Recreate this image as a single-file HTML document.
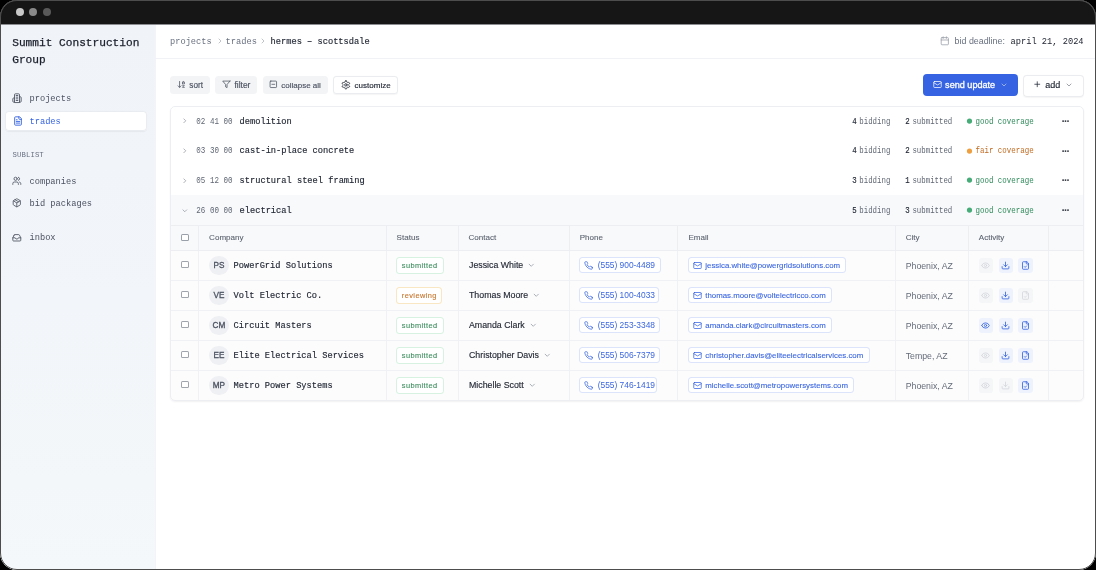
<!DOCTYPE html>
<html><head><meta charset="utf-8"><style>
html,body{margin:0;padding:0;background:#000;}
body{width:1096px;height:570px;overflow:hidden;position:relative;}
#win{position:absolute;left:0;top:0;width:1096px;height:570px;border-radius:17px;overflow:hidden;background:#fff;will-change:transform;}
.t{position:absolute;white-space:nowrap;}
.r{position:absolute;}
.i{position:absolute;overflow:visible;}
#frame{position:absolute;left:0;top:0;width:1096px;height:570px;box-sizing:border-box;border:1px solid #4d4d4d;border-radius:17px;pointer-events:none;}
</style></head><body><div id="win">
<div class="r" style="left:0.00px;top:0.00px;width:1096.00px;height:24.00px;background:#161616;border-radius:0px;"></div>
<div class="r" style="left:0.00px;top:24.00px;width:1096.00px;height:1.00px;background:#8c8d90;border-radius:0px;"></div>
<div class="r" style="left:16.00px;top:8.00px;width:8.00px;height:8.00px;background:#c8c8c8;border-radius:4px;"></div>
<div class="r" style="left:29.00px;top:8.00px;width:8.00px;height:8.00px;background:#8a8a8a;border-radius:4px;"></div>
<div class="r" style="left:43.00px;top:8.00px;width:8.00px;height:8.00px;background:#5a5a5a;border-radius:4px;"></div>
<div class="r" style="left:0.00px;top:25.00px;width:155.40px;height:545.00px;background:linear-gradient(180deg,#f0f3f8 0%,#f2f5f9 50%,#f5f8fa 100%);border-radius:0px;"></div>
<div class="r" style="left:154.90px;top:25.00px;width:0.60px;height:545.00px;background:rgba(225,228,234,0.4);border-radius:0px;"></div>
<div class="t" style="left:12.20px;top:37px;font-family:'Liberation Mono', monospace;font-size:11.17px;line-height:12px;color:#1a1f2b;font-weight:400;-webkit-text-stroke:0.25px currentColor;">Summit Construction</div>
<div class="t" style="left:12.20px;top:54px;font-family:'Liberation Mono', monospace;font-size:11.17px;line-height:12px;color:#1a1f2b;font-weight:400;-webkit-text-stroke:0.25px currentColor;">Group</div>
<svg class="i" style="left:12.30px;top:93.45px;width:10.00px;height:10.00px;" viewBox="0 0 24 24" fill="none" stroke="#525966" stroke-width="2.2" stroke-linecap="round" stroke-linejoin="round"><path d="M6 22V4a2 2 0 0 1 2-2h8a2 2 0 0 1 2 2v18Z"/><path d="M6 12H4a2 2 0 0 0-2 2v6a2 2 0 0 0 2 2h2"/><path d="M18 9h2a2 2 0 0 1 2 2v9a2 2 0 0 1-2 2h-2"/><path d="M10 6h4"/><path d="M10 10h4"/><path d="M10 14h4"/><path d="M10 18h4"/></svg>
<div class="t" style="left:29.50px;top:94px;font-family:'Liberation Mono', monospace;font-size:8.7px;line-height:10px;color:#4b5261;font-weight:400;">projects</div>
<div class="r" style="left:5.20px;top:111.30px;width:141.80px;height:20.00px;background:#fff;border-radius:4px;box-shadow:inset 0 0 0 1px #e9ecf0, 0 0.5px 1px rgba(0,0,0,0.05);"></div>
<svg class="i" style="left:12.50px;top:115.70px;width:10.00px;height:10.00px;" viewBox="0 0 24 24" fill="none" stroke="#3563e1" stroke-width="2.2" stroke-linecap="round" stroke-linejoin="round"><path d="M15 2H6a2 2 0 0 0-2 2v16a2 2 0 0 0 2 2h12a2 2 0 0 0 2-2V7Z"/><path d="M14 2v4a2 2 0 0 0 2 2h4"/><path d="M10 9H8"/><path d="M16 13H8"/><path d="M16 17H8"/></svg>
<div class="t" style="left:29.50px;top:117px;font-family:'Liberation Mono', monospace;font-size:8.7px;line-height:10px;color:#3563e1;font-weight:400;">trades</div>
<div class="t" style="left:12.50px;top:151px;font-family:'Liberation Mono', monospace;font-size:7.3px;line-height:8px;color:#687080;font-weight:400;letter-spacing:0.1px;transform:scaleY(1.1);transform-origin:0 85%;">SUBLIST</div>
<svg class="i" style="left:12.30px;top:175.90px;width:9.60px;height:9.60px;" viewBox="0 0 24 24" fill="none" stroke="#525966" stroke-width="2.2" stroke-linecap="round" stroke-linejoin="round"><path d="M16 21v-2a4 4 0 0 0-4-4H6a4 4 0 0 0-4 4v2"/><circle cx="9" cy="7" r="4"/><path d="M22 21v-2a4 4 0 0 0-3-3.87"/><path d="M16 3.13a4 4 0 0 1 0 7.75"/></svg>
<div class="t" style="left:29.50px;top:177px;font-family:'Liberation Mono', monospace;font-size:8.7px;line-height:10px;color:#4b5261;font-weight:400;">companies</div>
<svg class="i" style="left:12.40px;top:198.30px;width:9.60px;height:9.60px;" viewBox="0 0 24 24" fill="none" stroke="#525966" stroke-width="2.2" stroke-linecap="round" stroke-linejoin="round"><path d="M11 21.73a2 2 0 0 0 2 0l7-4A2 2 0 0 0 21 16V8a2 2 0 0 0-1-1.73l-7-4a2 2 0 0 0-2 0l-7 4A2 2 0 0 0 3 8v8a2 2 0 0 0 1 1.73z"/><path d="M12 22V12"/><path d="m3.3 7 7.703 4.734a2 2 0 0 0 1.994 0L20.7 7"/><path d="m7.5 4.27 9 5.15"/></svg>
<div class="t" style="left:29.50px;top:199px;font-family:'Liberation Mono', monospace;font-size:8.7px;line-height:10px;color:#4b5261;font-weight:400;">bid packages</div>
<svg class="i" style="left:12.40px;top:232.50px;width:9.60px;height:9.60px;" viewBox="0 0 24 24" fill="none" stroke="#525966" stroke-width="2.2" stroke-linecap="round" stroke-linejoin="round"><polyline points="22 12 16 12 14 15 10 15 8 12 2 12"/><path d="M5.45 5.11 2 12v6a2 2 0 0 0 2 2h16a2 2 0 0 0 2-2v-6l-3.45-6.89A2 2 0 0 0 16.76 4H7.24a2 2 0 0 0-1.79 1.11z"/></svg>
<div class="t" style="left:29.50px;top:233px;font-family:'Liberation Mono', monospace;font-size:8.7px;line-height:10px;color:#4b5261;font-weight:400;">inbox</div>
<div class="r" style="left:155.40px;top:58.00px;width:940.60px;height:1.00px;background:#f1f2f5;border-radius:0px;"></div>
<div class="t" style="left:170.00px;top:37px;font-family:'Liberation Mono', monospace;font-size:8.7px;line-height:10px;color:#687080;font-weight:400;">projects</div>
<svg class="i" style="left:215.50px;top:37.10px;width:8.00px;height:8.00px;" viewBox="0 0 24 24" fill="none" stroke="#9ba1ab" stroke-width="1.9" stroke-linecap="round" stroke-linejoin="round"><path d="m9 18 6-6-6-6"/></svg>
<div class="t" style="left:225.60px;top:37px;font-family:'Liberation Mono', monospace;font-size:8.7px;line-height:10px;color:#687080;font-weight:400;">trades</div>
<svg class="i" style="left:259.20px;top:37.10px;width:8.00px;height:8.00px;" viewBox="0 0 24 24" fill="none" stroke="#9ba1ab" stroke-width="1.9" stroke-linecap="round" stroke-linejoin="round"><path d="m9 18 6-6-6-6"/></svg>
<div class="t" style="left:270.60px;top:37px;font-family:'Liberation Mono', monospace;font-size:8.7px;line-height:10px;color:#1d2330;font-weight:400;-webkit-text-stroke:0.15px currentColor;">hermes – scottsdale</div>
<svg class="i" style="left:940.10px;top:36.10px;width:9.60px;height:9.60px;" viewBox="0 0 24 24" fill="none" stroke="#9aa0aa" stroke-width="2" stroke-linecap="round" stroke-linejoin="round"><path d="M8 2v4"/><path d="M16 2v4"/><rect width="18" height="18" x="3" y="4" rx="2"/><path d="M3 10h18"/></svg>
<div class="t" style="left:954.60px;top:36px;font-family:'Liberation Sans', sans-serif;font-size:8.87px;line-height:10px;color:#687080;font-weight:400;">bid deadline:</div>
<div class="t" style="left:1010.60px;top:37px;font-family:'Liberation Mono', monospace;font-size:8.7px;line-height:10px;color:#202532;font-weight:400;">april 21, 2024</div>
<div class="r" style="left:170.00px;top:76.00px;width:39.80px;height:17.60px;background:#f3f4f6;border-radius:3.5px;"></div>
<svg class="i" style="left:177.30px;top:80.35px;width:8.80px;height:8.80px;" viewBox="0 0 24 24" fill="none" stroke="#4b5261" stroke-width="2.1" stroke-linecap="round" stroke-linejoin="round"><path d="m3 16 4 4 4-4"/><path d="M7 20V4"/><path d="M20 8h-5"/><path d="M15 10V6.5a2.5 2.5 0 0 1 5 0V10"/><path d="M15 14h5l-5 6h5"/></svg>
<div class="t" style="left:189.30px;top:81px;font-family:'Liberation Sans', sans-serif;font-size:8.2px;line-height:9px;color:#4b5261;font-weight:400;-webkit-text-stroke:0.15px currentColor;">sort</div>
<div class="r" style="left:215.30px;top:76.00px;width:42.20px;height:17.60px;background:#f3f4f6;border-radius:3.5px;"></div>
<svg class="i" style="left:221.75px;top:80.35px;width:8.70px;height:8.70px;" viewBox="0 0 24 24" fill="none" stroke="#4b5261" stroke-width="2.1" stroke-linecap="round" stroke-linejoin="round"><polygon points="22 3 2 3 10 12.46 10 19 14 21 14 12.46 22 3"/></svg>
<div class="t" style="left:234.40px;top:80px;font-family:'Liberation Sans', sans-serif;font-size:8.5px;line-height:10px;color:#4b5261;font-weight:400;-webkit-text-stroke:0.15px currentColor;">filter</div>
<div class="r" style="left:262.80px;top:76.00px;width:65.00px;height:17.60px;background:#f3f4f6;border-radius:3.5px;"></div>
<svg class="i" style="left:269.30px;top:80.10px;width:8.64px;height:8.64px;" viewBox="0 0 24 24" fill="none" stroke="#4b5261" stroke-width="2.1" stroke-linecap="round" stroke-linejoin="round"><rect width="18" height="18" x="3" y="3" rx="2"/><path d="M8 12h8"/></svg>
<div class="t" style="left:281.30px;top:81px;font-family:'Liberation Sans', sans-serif;font-size:8.0px;line-height:9px;color:#4b5261;font-weight:400;-webkit-text-stroke:0.15px currentColor;">collapse all</div>
<div class="r" style="left:332.80px;top:75.60px;width:65.70px;height:18.40px;background:#fff;border-radius:3.5px;box-shadow:inset 0 0 0 1px #eaecef;box-shadow:inset 0 0 0 1px #eaecef, 0 0.5px 1px rgba(0,0,0,0.04);"></div>
<svg class="i" style="left:340.50px;top:79.65px;width:9.80px;height:9.80px;" viewBox="0 0 24 24" fill="none" stroke="#1d2330" stroke-width="2" stroke-linecap="round" stroke-linejoin="round"><path d="M12.22 2h-.44a2 2 0 0 0-2 2v.18a2 2 0 0 1-1 1.73l-.43.25a2 2 0 0 1-2 0l-.15-.08a2 2 0 0 0-2.73.73l-.22.38a2 2 0 0 0 .73 2.73l.15.1a2 2 0 0 1 1 1.72v.51a2 2 0 0 1-1 1.74l-.15.09a2 2 0 0 0-.73 2.73l.22.38a2 2 0 0 0 2.73.73l.15-.08a2 2 0 0 1 2 0l.43.25a2 2 0 0 1 1 1.73V20a2 2 0 0 0 2 2h.44a2 2 0 0 0 2-2v-.18a2 2 0 0 1 1-1.73l.43-.25a2 2 0 0 1 2 0l.15.08a2 2 0 0 0 2.73-.73l.22-.39a2 2 0 0 0-.73-2.73l-.15-.08a2 2 0 0 1-1-1.74v-.5a2 2 0 0 1 1-1.74l.15-.09a2 2 0 0 0 .73-2.73l-.22-.38a2 2 0 0 0-2.73-.73l-.15.08a2 2 0 0 1-2 0l-.43-.25a2 2 0 0 1-1-1.73V4a2 2 0 0 0-2-2z"/><circle cx="12" cy="12" r="3"/></svg>
<div class="t" style="left:354.60px;top:81px;font-family:'Liberation Sans', sans-serif;font-size:8.0px;line-height:9px;color:#1d2330;font-weight:400;-webkit-text-stroke:0.15px currentColor;">customize</div>
<div class="r" style="left:922.90px;top:74.10px;width:94.90px;height:21.80px;background:#3563e1;border-radius:4px;"></div>
<svg class="i" style="left:932.50px;top:80.15px;width:9.00px;height:9.00px;" viewBox="0 0 24 24" fill="none" stroke="#fff" stroke-width="2" stroke-linecap="round" stroke-linejoin="round"><rect width="20" height="16" x="2" y="4" rx="2"/><path d="m22 7-8.97 5.7a1.94 1.94 0 0 1-2.06 0L2 7"/></svg>
<div class="t" style="left:945.10px;top:80px;font-family:'Liberation Sans', sans-serif;font-size:9.1px;line-height:10px;color:#fff;font-weight:400;-webkit-text-stroke:0.3px #fff;">send update</div>
<svg class="i" style="left:1000.00px;top:80.75px;width:8.00px;height:8.00px;" viewBox="0 0 24 24" fill="none" stroke="#c9d5f8" stroke-width="2" stroke-linecap="round" stroke-linejoin="round"><path d="m6 9 6 6 6-6"/></svg>
<div class="r" style="left:1023.20px;top:74.50px;width:60.50px;height:22.00px;background:#fff;border-radius:4px;box-shadow:inset 0 0 0 1px #eaecef;box-shadow:inset 0 0 0 1px #eaecef, 0 0.5px 1px rgba(0,0,0,0.04);"></div>
<svg class="i" style="left:1033.35px;top:80.45px;width:8.50px;height:8.50px;" viewBox="0 0 24 24" fill="none" stroke="#1d2330" stroke-width="2.1" stroke-linecap="round" stroke-linejoin="round"><path d="M5 12h14"/><path d="M12 5v14"/></svg>
<div class="t" style="left:1045.30px;top:80px;font-family:'Liberation Sans', sans-serif;font-size:9.0px;line-height:10px;color:#1d2330;font-weight:400;-webkit-text-stroke:0.15px currentColor;">add</div>
<svg class="i" style="left:1065.35px;top:80.50px;width:8.00px;height:8.00px;" viewBox="0 0 24 24" fill="none" stroke="#6b7280" stroke-width="2" stroke-linecap="round" stroke-linejoin="round"><path d="m6 9 6 6 6-6"/></svg>
<div class="r" style="left:170.00px;top:106.00px;width:914.00px;height:295.00px;background:#fff;border-radius:5px;box-shadow:0 1px 2px rgba(16,24,40,0.06);"></div>
<div class="r" style="left:171.00px;top:195.00px;width:912.00px;height:30.00px;background:#f8f9fb;border-radius:0px;"></div>
<svg class="i" style="left:180.80px;top:117.40px;width:7.60px;height:7.60px;" viewBox="0 0 24 24" fill="none" stroke="#8d939d" stroke-width="2.3" stroke-linecap="round" stroke-linejoin="round"><path d="m9 18 6-6-6-6"/></svg>
<div class="t" style="left:196.30px;top:118px;font-family:'Liberation Mono', monospace;font-size:7.56px;line-height:8px;color:#5f6673;font-weight:400;transform:scaleY(1.13);transform-origin:0 85%;">02 41 00</div>
<div class="t" style="left:239.60px;top:117px;font-family:'Liberation Mono', monospace;font-size:8.7px;line-height:10px;color:#1d2330;font-weight:400;-webkit-text-stroke:0.15px currentColor;">demolition</div>
<div class="t" style="left:852.20px;top:118px;font-family:'Liberation Mono', monospace;font-size:7.4px;line-height:8px;color:#1d2330;font-weight:400;-webkit-text-stroke:0.12px currentColor;transform:scaleY(1.15);transform-origin:0 85%;">4</div>
<div class="t" style="left:859.30px;top:118px;font-family:'Liberation Mono', monospace;font-size:7.4px;line-height:8px;color:#5f6673;font-weight:400;transform:scaleY(1.15);transform-origin:0 85%;">bidding</div>
<div class="t" style="left:905.30px;top:118px;font-family:'Liberation Mono', monospace;font-size:7.4px;line-height:8px;color:#1d2330;font-weight:400;-webkit-text-stroke:0.12px currentColor;transform:scaleY(1.15);transform-origin:0 85%;">2</div>
<div class="t" style="left:912.40px;top:118px;font-family:'Liberation Mono', monospace;font-size:7.4px;line-height:8px;color:#5f6673;font-weight:400;transform:scaleY(1.15);transform-origin:0 85%;">submitted</div>
<svg class="i" style="left:964.00px;top:116.00px;width:10px;height:10px" viewBox="0 0 10 10"><circle cx="5.5" cy="5.1" r="2.6" fill="#46ad78"/></svg>
<div class="t" style="left:975.50px;top:118px;font-family:'Liberation Mono', monospace;font-size:7.46px;line-height:8px;color:#2f8a5a;font-weight:400;transform:scaleY(1.15);transform-origin:0 85%;">good coverage</div>
<svg class="i" style="left:1058.00px;top:116.00px;width:16px;height:10px" viewBox="0 0 16 10"><circle cx="5.1" cy="5.1" r="0.95" fill="#2a2f38"/><circle cx="7.5" cy="5.1" r="0.95" fill="#2a2f38"/><circle cx="10.0" cy="5.1" r="0.95" fill="#2a2f38"/></svg>
<svg class="i" style="left:180.80px;top:147.00px;width:7.60px;height:7.60px;" viewBox="0 0 24 24" fill="none" stroke="#8d939d" stroke-width="2.3" stroke-linecap="round" stroke-linejoin="round"><path d="m9 18 6-6-6-6"/></svg>
<div class="t" style="left:196.30px;top:147px;font-family:'Liberation Mono', monospace;font-size:7.56px;line-height:8px;color:#5f6673;font-weight:400;transform:scaleY(1.13);transform-origin:0 85%;">03 30 00</div>
<div class="t" style="left:239.60px;top:146px;font-family:'Liberation Mono', monospace;font-size:8.7px;line-height:10px;color:#1d2330;font-weight:400;-webkit-text-stroke:0.15px currentColor;">cast-in-place concrete</div>
<div class="t" style="left:852.20px;top:147px;font-family:'Liberation Mono', monospace;font-size:7.4px;line-height:8px;color:#1d2330;font-weight:400;-webkit-text-stroke:0.12px currentColor;transform:scaleY(1.15);transform-origin:0 85%;">4</div>
<div class="t" style="left:859.30px;top:147px;font-family:'Liberation Mono', monospace;font-size:7.4px;line-height:8px;color:#5f6673;font-weight:400;transform:scaleY(1.15);transform-origin:0 85%;">bidding</div>
<div class="t" style="left:905.30px;top:147px;font-family:'Liberation Mono', monospace;font-size:7.4px;line-height:8px;color:#1d2330;font-weight:400;-webkit-text-stroke:0.12px currentColor;transform:scaleY(1.15);transform-origin:0 85%;">2</div>
<div class="t" style="left:912.40px;top:147px;font-family:'Liberation Mono', monospace;font-size:7.4px;line-height:8px;color:#5f6673;font-weight:400;transform:scaleY(1.15);transform-origin:0 85%;">submitted</div>
<svg class="i" style="left:964.00px;top:145.60px;width:10px;height:10px" viewBox="0 0 10 10"><circle cx="5.5" cy="5.1" r="2.6" fill="#eea040"/></svg>
<div class="t" style="left:975.50px;top:147px;font-family:'Liberation Mono', monospace;font-size:7.46px;line-height:8px;color:#c06a20;font-weight:400;transform:scaleY(1.15);transform-origin:0 85%;">fair coverage</div>
<svg class="i" style="left:1058.00px;top:145.60px;width:16px;height:10px" viewBox="0 0 16 10"><circle cx="5.1" cy="5.1" r="0.95" fill="#2a2f38"/><circle cx="7.5" cy="5.1" r="0.95" fill="#2a2f38"/><circle cx="10.0" cy="5.1" r="0.95" fill="#2a2f38"/></svg>
<svg class="i" style="left:180.80px;top:176.70px;width:7.60px;height:7.60px;" viewBox="0 0 24 24" fill="none" stroke="#8d939d" stroke-width="2.3" stroke-linecap="round" stroke-linejoin="round"><path d="m9 18 6-6-6-6"/></svg>
<div class="t" style="left:196.30px;top:177px;font-family:'Liberation Mono', monospace;font-size:7.56px;line-height:8px;color:#5f6673;font-weight:400;transform:scaleY(1.13);transform-origin:0 85%;">05 12 00</div>
<div class="t" style="left:239.60px;top:176px;font-family:'Liberation Mono', monospace;font-size:8.7px;line-height:10px;color:#1d2330;font-weight:400;-webkit-text-stroke:0.15px currentColor;">structural steel framing</div>
<div class="t" style="left:852.20px;top:177px;font-family:'Liberation Mono', monospace;font-size:7.4px;line-height:8px;color:#1d2330;font-weight:400;-webkit-text-stroke:0.12px currentColor;transform:scaleY(1.15);transform-origin:0 85%;">3</div>
<div class="t" style="left:859.30px;top:177px;font-family:'Liberation Mono', monospace;font-size:7.4px;line-height:8px;color:#5f6673;font-weight:400;transform:scaleY(1.15);transform-origin:0 85%;">bidding</div>
<div class="t" style="left:905.30px;top:177px;font-family:'Liberation Mono', monospace;font-size:7.4px;line-height:8px;color:#1d2330;font-weight:400;-webkit-text-stroke:0.12px currentColor;transform:scaleY(1.15);transform-origin:0 85%;">1</div>
<div class="t" style="left:912.40px;top:177px;font-family:'Liberation Mono', monospace;font-size:7.4px;line-height:8px;color:#5f6673;font-weight:400;transform:scaleY(1.15);transform-origin:0 85%;">submitted</div>
<svg class="i" style="left:964.00px;top:175.30px;width:10px;height:10px" viewBox="0 0 10 10"><circle cx="5.5" cy="5.1" r="2.6" fill="#46ad78"/></svg>
<div class="t" style="left:975.50px;top:177px;font-family:'Liberation Mono', monospace;font-size:7.46px;line-height:8px;color:#2f8a5a;font-weight:400;transform:scaleY(1.15);transform-origin:0 85%;">good coverage</div>
<svg class="i" style="left:1058.00px;top:175.30px;width:16px;height:10px" viewBox="0 0 16 10"><circle cx="5.1" cy="5.1" r="0.95" fill="#2a2f38"/><circle cx="7.5" cy="5.1" r="0.95" fill="#2a2f38"/><circle cx="10.0" cy="5.1" r="0.95" fill="#2a2f38"/></svg>
<svg class="i" style="left:180.80px;top:206.50px;width:7.60px;height:7.60px;" viewBox="0 0 24 24" fill="none" stroke="#8d939d" stroke-width="2.3" stroke-linecap="round" stroke-linejoin="round"><path d="m6 9 6 6 6-6"/></svg>
<div class="t" style="left:196.30px;top:207px;font-family:'Liberation Mono', monospace;font-size:7.56px;line-height:8px;color:#5f6673;font-weight:400;transform:scaleY(1.13);transform-origin:0 85%;">26 00 00</div>
<div class="t" style="left:239.60px;top:206px;font-family:'Liberation Mono', monospace;font-size:8.7px;line-height:10px;color:#1d2330;font-weight:400;-webkit-text-stroke:0.15px currentColor;">electrical</div>
<div class="t" style="left:852.20px;top:207px;font-family:'Liberation Mono', monospace;font-size:7.4px;line-height:8px;color:#1d2330;font-weight:400;-webkit-text-stroke:0.12px currentColor;transform:scaleY(1.15);transform-origin:0 85%;">5</div>
<div class="t" style="left:859.30px;top:207px;font-family:'Liberation Mono', monospace;font-size:7.4px;line-height:8px;color:#5f6673;font-weight:400;transform:scaleY(1.15);transform-origin:0 85%;">bidding</div>
<div class="t" style="left:905.30px;top:207px;font-family:'Liberation Mono', monospace;font-size:7.4px;line-height:8px;color:#1d2330;font-weight:400;-webkit-text-stroke:0.12px currentColor;transform:scaleY(1.15);transform-origin:0 85%;">3</div>
<div class="t" style="left:912.40px;top:207px;font-family:'Liberation Mono', monospace;font-size:7.4px;line-height:8px;color:#5f6673;font-weight:400;transform:scaleY(1.15);transform-origin:0 85%;">submitted</div>
<svg class="i" style="left:964.00px;top:205.00px;width:10px;height:10px" viewBox="0 0 10 10"><circle cx="5.5" cy="5.1" r="2.6" fill="#46ad78"/></svg>
<div class="t" style="left:975.50px;top:207px;font-family:'Liberation Mono', monospace;font-size:7.46px;line-height:8px;color:#2f8a5a;font-weight:400;transform:scaleY(1.15);transform-origin:0 85%;">good coverage</div>
<svg class="i" style="left:1058.00px;top:205.00px;width:16px;height:10px" viewBox="0 0 16 10"><circle cx="5.1" cy="5.1" r="0.95" fill="#2a2f38"/><circle cx="7.5" cy="5.1" r="0.95" fill="#2a2f38"/><circle cx="10.0" cy="5.1" r="0.95" fill="#2a2f38"/></svg>
<div class="r" style="left:171.00px;top:225.00px;width:912.00px;height:25.00px;background:#f8f9fa;border-radius:0px;"></div>
<div class="r" style="left:171.00px;top:225.00px;width:912.00px;height:1.00px;background:#eceef1;border-radius:0px;"></div>
<div class="r" style="left:171.00px;top:250.00px;width:912.00px;height:1.00px;background:#eceef1;border-radius:0px;"></div>
<div class="r" style="left:198.00px;top:226.00px;width:1.00px;height:24.00px;background:#eceef1;border-radius:0px;"></div>
<div class="r" style="left:386.00px;top:226.00px;width:1.00px;height:24.00px;background:#eceef1;border-radius:0px;"></div>
<div class="r" style="left:458.00px;top:226.00px;width:1.00px;height:24.00px;background:#eceef1;border-radius:0px;"></div>
<div class="r" style="left:569.00px;top:226.00px;width:1.00px;height:24.00px;background:#eceef1;border-radius:0px;"></div>
<div class="r" style="left:677.00px;top:226.00px;width:1.00px;height:24.00px;background:#eceef1;border-radius:0px;"></div>
<div class="r" style="left:895.00px;top:226.00px;width:1.00px;height:24.00px;background:#eceef1;border-radius:0px;"></div>
<div class="r" style="left:968.00px;top:226.00px;width:1.00px;height:24.00px;background:#eceef1;border-radius:0px;"></div>
<div class="r" style="left:1048.00px;top:226.00px;width:1.00px;height:24.00px;background:#eceef1;border-radius:0px;"></div>
<div class="r" style="left:180.90px;top:233.80px;width:7.70px;height:7.70px;background:#fff;border-radius:1.5px;box-shadow:inset 0 0 0 1px #9aa0aa;"></div>
<div class="t" style="left:209.10px;top:233px;font-family:'Liberation Sans', sans-serif;font-size:8.05px;line-height:9px;color:#5a616e;font-weight:400;-webkit-text-stroke:0.08px currentColor;">Company</div>
<div class="t" style="left:396.60px;top:233px;font-family:'Liberation Sans', sans-serif;font-size:8.05px;line-height:9px;color:#5a616e;font-weight:400;-webkit-text-stroke:0.08px currentColor;">Status</div>
<div class="t" style="left:468.50px;top:233px;font-family:'Liberation Sans', sans-serif;font-size:8.05px;line-height:9px;color:#5a616e;font-weight:400;-webkit-text-stroke:0.08px currentColor;">Contact</div>
<div class="t" style="left:579.70px;top:233px;font-family:'Liberation Sans', sans-serif;font-size:8.05px;line-height:9px;color:#5a616e;font-weight:400;-webkit-text-stroke:0.08px currentColor;">Phone</div>
<div class="t" style="left:688.40px;top:233px;font-family:'Liberation Sans', sans-serif;font-size:8.05px;line-height:9px;color:#5a616e;font-weight:400;-webkit-text-stroke:0.08px currentColor;">Email</div>
<div class="t" style="left:905.70px;top:233px;font-family:'Liberation Sans', sans-serif;font-size:8.05px;line-height:9px;color:#5a616e;font-weight:400;-webkit-text-stroke:0.08px currentColor;">City</div>
<div class="t" style="left:978.80px;top:233px;font-family:'Liberation Sans', sans-serif;font-size:8.05px;line-height:9px;color:#5a616e;font-weight:400;-webkit-text-stroke:0.08px currentColor;">Activity</div>
<div class="r" style="left:171.00px;top:251.00px;width:912.00px;height:29.00px;background:#fcfcfd;border-radius:0px;"></div>
<div class="r" style="left:171.00px;top:280.00px;width:912.00px;height:1.00px;background:#f0f1f4;border-radius:0px;"></div>
<div class="r" style="left:198.00px;top:251.00px;width:1.00px;height:29.00px;background:#f0f1f4;border-radius:0px;"></div>
<div class="r" style="left:386.00px;top:251.00px;width:1.00px;height:29.00px;background:#f0f1f4;border-radius:0px;"></div>
<div class="r" style="left:458.00px;top:251.00px;width:1.00px;height:29.00px;background:#f0f1f4;border-radius:0px;"></div>
<div class="r" style="left:569.00px;top:251.00px;width:1.00px;height:29.00px;background:#f0f1f4;border-radius:0px;"></div>
<div class="r" style="left:677.00px;top:251.00px;width:1.00px;height:29.00px;background:#f0f1f4;border-radius:0px;"></div>
<div class="r" style="left:895.00px;top:251.00px;width:1.00px;height:29.00px;background:#f0f1f4;border-radius:0px;"></div>
<div class="r" style="left:968.00px;top:251.00px;width:1.00px;height:29.00px;background:#f0f1f4;border-radius:0px;"></div>
<div class="r" style="left:1048.00px;top:251.00px;width:1.00px;height:29.00px;background:#f0f1f4;border-radius:0px;"></div>
<div class="r" style="left:181.00px;top:260.90px;width:7.60px;height:7.60px;background:#fff;border-radius:1.5px;box-shadow:inset 0 0 0 1px #a0a5ad;"></div>
<div class="r" style="left:209.20px;top:255.50px;width:19.50px;height:19.50px;background:#eff0f3;border-radius:10px;"></div>
<div class="t" style="left:213.48px;top:261px;font-family:'Liberation Sans', sans-serif;font-size:8.2px;line-height:9px;color:#4b5261;font-weight:400;-webkit-text-stroke:0.3px currentColor;">PS</div>
<div class="t" style="left:233.60px;top:261px;font-family:'Liberation Mono', monospace;font-size:8.7px;line-height:10px;color:#1d2330;font-weight:400;-webkit-text-stroke:0.15px currentColor;">PowerGrid Solutions</div>
<div class="r" style="left:396.00px;top:257.30px;width:48.00px;height:16.50px;background:#fff;border-radius:3.5px;box-shadow:inset 0 0 0 1px #d8f2e2;"></div>
<div class="t" style="left:401.80px;top:261px;font-family:'Liberation Sans', sans-serif;font-size:7.4px;line-height:9px;color:#3f8f60;font-weight:400;letter-spacing:0.42px;-webkit-text-stroke:0.12px currentColor;">submitted</div>
<div class="t" style="left:469.00px;top:260px;font-family:'Liberation Sans', sans-serif;font-size:8.8px;line-height:10px;color:#252a35;font-weight:400;-webkit-text-stroke:0.15px currentColor;">Jessica White</div>
<svg class="i" style="left:527.48px;top:261.00px;width:8.50px;height:8.50px;" viewBox="0 0 24 24" fill="none" stroke="#8a909a" stroke-width="2" stroke-linecap="round" stroke-linejoin="round"><path d="m6 9 6 6 6-6"/></svg>
<div class="r" style="left:579.30px;top:257.20px;width:81.40px;height:15.80px;background:#fff;border-radius:3.5px;box-shadow:inset 0 0 0 1px #dbe4fa;"></div>
<svg class="i" style="left:584.20px;top:260.80px;width:9.00px;height:9.00px;" viewBox="0 0 24 24" fill="none" stroke="#3563e1" stroke-width="2" stroke-linecap="round" stroke-linejoin="round"><path d="M22 16.92v3a2 2 0 0 1-2.18 2 19.79 19.79 0 0 1-8.63-3.07 19.5 19.5 0 0 1-6-6 19.79 19.79 0 0 1-3.07-8.67A2 2 0 0 1 4.11 2h3a2 2 0 0 1 2 1.72 12.84 12.84 0 0 0 .7 2.81 2 2 0 0 1-.45 2.11L8.09 9.91a16 16 0 0 0 6 6l1.27-1.27a2 2 0 0 1 2.11-.45 12.84 12.84 0 0 0 2.81.7A2 2 0 0 1 22 16.92z"/></svg>
<div class="t" style="left:597.70px;top:260px;font-family:'Liberation Sans', sans-serif;font-size:8.38px;line-height:10px;color:#3a66e0;font-weight:400;">(555) 900-4489</div>
<div class="r" style="left:688.20px;top:257.20px;width:157.93px;height:15.80px;background:#fff;border-radius:3.5px;box-shadow:inset 0 0 0 1px #dbe4fa;"></div>
<svg class="i" style="left:693.10px;top:260.80px;width:9.00px;height:9.00px;" viewBox="0 0 24 24" fill="none" stroke="#3563e1" stroke-width="2" stroke-linecap="round" stroke-linejoin="round"><rect width="20" height="16" x="2" y="4" rx="2"/><path d="m22 7-8.97 5.7a1.94 1.94 0 0 1-2.06 0L2 7"/></svg>
<div class="t" style="left:705.30px;top:261px;font-family:'Liberation Sans', sans-serif;font-size:7.85px;line-height:9px;color:#3a66e0;font-weight:400;-webkit-text-stroke:0.1px currentColor;">jessica.white@powergridsolutions.com</div>
<div class="t" style="left:905.70px;top:261px;font-family:'Liberation Sans', sans-serif;font-size:8.75px;line-height:10px;color:#646b78;font-weight:400;">Phoenix, AZ</div>
<div class="r" style="left:978.80px;top:258.10px;width:14.50px;height:14.50px;background:#f5f6f8;border-radius:3px;"></div>
<svg class="i" style="left:980.75px;top:260.80px;width:9.00px;height:9.00px;" viewBox="0 0 24 24" fill="none" stroke="#d3d6dc" stroke-width="2.2" stroke-linecap="round" stroke-linejoin="round"><path d="M2.062 12.348a1 1 0 0 1 0-.696 10.75 10.75 0 0 1 19.876 0 1 1 0 0 1 0 .696 10.75 10.75 0 0 1-19.876 0"/><circle cx="12" cy="12" r="3"/></svg>
<div class="r" style="left:998.60px;top:258.10px;width:14.50px;height:14.50px;background:#edf2fd;border-radius:3px;"></div>
<svg class="i" style="left:1001.35px;top:260.80px;width:9.00px;height:9.00px;" viewBox="0 0 24 24" fill="none" stroke="#3563e1" stroke-width="2.2" stroke-linecap="round" stroke-linejoin="round"><path d="M21 15v4a2 2 0 0 1-2 2H5a2 2 0 0 1-2-2v-4"/><polyline points="7 10 12 15 17 10"/><line x1="12" x2="12" y1="15" y2="3"/></svg>
<div class="r" style="left:1018.10px;top:258.10px;width:14.50px;height:14.50px;background:#edf2fd;border-radius:3px;"></div>
<svg class="i" style="left:1020.85px;top:260.80px;width:9.00px;height:9.00px;" viewBox="0 0 24 24" fill="none" stroke="#3563e1" stroke-width="2.2" stroke-linecap="round" stroke-linejoin="round"><path d="M15 2H6a2 2 0 0 0-2 2v16a2 2 0 0 0 2 2h12a2 2 0 0 0 2-2V7Z"/><path d="M14 2v4a2 2 0 0 0 2 2h4"/><path d="m9 15 2 2 4-4"/></svg>
<div class="r" style="left:171.00px;top:281.00px;width:912.00px;height:29.00px;background:#fcfcfd;border-radius:0px;"></div>
<div class="r" style="left:171.00px;top:310.00px;width:912.00px;height:1.00px;background:#f0f1f4;border-radius:0px;"></div>
<div class="r" style="left:198.00px;top:281.00px;width:1.00px;height:29.00px;background:#f0f1f4;border-radius:0px;"></div>
<div class="r" style="left:386.00px;top:281.00px;width:1.00px;height:29.00px;background:#f0f1f4;border-radius:0px;"></div>
<div class="r" style="left:458.00px;top:281.00px;width:1.00px;height:29.00px;background:#f0f1f4;border-radius:0px;"></div>
<div class="r" style="left:569.00px;top:281.00px;width:1.00px;height:29.00px;background:#f0f1f4;border-radius:0px;"></div>
<div class="r" style="left:677.00px;top:281.00px;width:1.00px;height:29.00px;background:#f0f1f4;border-radius:0px;"></div>
<div class="r" style="left:895.00px;top:281.00px;width:1.00px;height:29.00px;background:#f0f1f4;border-radius:0px;"></div>
<div class="r" style="left:968.00px;top:281.00px;width:1.00px;height:29.00px;background:#f0f1f4;border-radius:0px;"></div>
<div class="r" style="left:1048.00px;top:281.00px;width:1.00px;height:29.00px;background:#f0f1f4;border-radius:0px;"></div>
<div class="r" style="left:181.00px;top:290.90px;width:7.60px;height:7.60px;background:#fff;border-radius:1.5px;box-shadow:inset 0 0 0 1px #a0a5ad;"></div>
<div class="r" style="left:209.20px;top:285.50px;width:19.50px;height:19.50px;background:#eff0f3;border-radius:10px;"></div>
<div class="t" style="left:213.48px;top:291px;font-family:'Liberation Sans', sans-serif;font-size:8.2px;line-height:9px;color:#4b5261;font-weight:400;-webkit-text-stroke:0.3px currentColor;">VE</div>
<div class="t" style="left:233.60px;top:291px;font-family:'Liberation Mono', monospace;font-size:8.7px;line-height:10px;color:#1d2330;font-weight:400;-webkit-text-stroke:0.15px currentColor;">Volt Electric Co.</div>
<div class="r" style="left:396.00px;top:287.30px;width:45.50px;height:16.50px;background:#fff;border-radius:3.5px;box-shadow:inset 0 0 0 1px #f9e6c2;"></div>
<div class="t" style="left:401.80px;top:291px;font-family:'Liberation Sans', sans-serif;font-size:7.4px;line-height:9px;color:#c7772e;font-weight:400;letter-spacing:0.42px;-webkit-text-stroke:0.12px currentColor;">reviewing</div>
<div class="t" style="left:469.00px;top:290px;font-family:'Liberation Sans', sans-serif;font-size:8.8px;line-height:10px;color:#252a35;font-weight:400;-webkit-text-stroke:0.15px currentColor;">Thomas Moore</div>
<svg class="i" style="left:532.38px;top:291.00px;width:8.50px;height:8.50px;" viewBox="0 0 24 24" fill="none" stroke="#8a909a" stroke-width="2" stroke-linecap="round" stroke-linejoin="round"><path d="m6 9 6 6 6-6"/></svg>
<div class="r" style="left:579.30px;top:287.20px;width:79.60px;height:15.80px;background:#fff;border-radius:3.5px;box-shadow:inset 0 0 0 1px #dbe4fa;"></div>
<svg class="i" style="left:584.20px;top:290.80px;width:9.00px;height:9.00px;" viewBox="0 0 24 24" fill="none" stroke="#3563e1" stroke-width="2" stroke-linecap="round" stroke-linejoin="round"><path d="M22 16.92v3a2 2 0 0 1-2.18 2 19.79 19.79 0 0 1-8.63-3.07 19.5 19.5 0 0 1-6-6 19.79 19.79 0 0 1-3.07-8.67A2 2 0 0 1 4.11 2h3a2 2 0 0 1 2 1.72 12.84 12.84 0 0 0 .7 2.81 2 2 0 0 1-.45 2.11L8.09 9.91a16 16 0 0 0 6 6l1.27-1.27a2 2 0 0 1 2.11-.45 12.84 12.84 0 0 0 2.81.7A2 2 0 0 1 22 16.92z"/></svg>
<div class="t" style="left:597.70px;top:290px;font-family:'Liberation Sans', sans-serif;font-size:8.38px;line-height:10px;color:#3a66e0;font-weight:400;">(555) 100-4033</div>
<div class="r" style="left:688.20px;top:287.20px;width:143.53px;height:15.80px;background:#fff;border-radius:3.5px;box-shadow:inset 0 0 0 1px #dbe4fa;"></div>
<svg class="i" style="left:693.10px;top:290.80px;width:9.00px;height:9.00px;" viewBox="0 0 24 24" fill="none" stroke="#3563e1" stroke-width="2" stroke-linecap="round" stroke-linejoin="round"><rect width="20" height="16" x="2" y="4" rx="2"/><path d="m22 7-8.97 5.7a1.94 1.94 0 0 1-2.06 0L2 7"/></svg>
<div class="t" style="left:705.30px;top:291px;font-family:'Liberation Sans', sans-serif;font-size:7.85px;line-height:9px;color:#3a66e0;font-weight:400;-webkit-text-stroke:0.1px currentColor;">thomas.moore@voltelectricco.com</div>
<div class="t" style="left:905.70px;top:291px;font-family:'Liberation Sans', sans-serif;font-size:8.75px;line-height:10px;color:#646b78;font-weight:400;">Phoenix, AZ</div>
<div class="r" style="left:978.80px;top:288.10px;width:14.50px;height:14.50px;background:#f5f6f8;border-radius:3px;"></div>
<svg class="i" style="left:980.75px;top:290.80px;width:9.00px;height:9.00px;" viewBox="0 0 24 24" fill="none" stroke="#d3d6dc" stroke-width="2.2" stroke-linecap="round" stroke-linejoin="round"><path d="M2.062 12.348a1 1 0 0 1 0-.696 10.75 10.75 0 0 1 19.876 0 1 1 0 0 1 0 .696 10.75 10.75 0 0 1-19.876 0"/><circle cx="12" cy="12" r="3"/></svg>
<div class="r" style="left:998.60px;top:288.10px;width:14.50px;height:14.50px;background:#edf2fd;border-radius:3px;"></div>
<svg class="i" style="left:1001.35px;top:290.80px;width:9.00px;height:9.00px;" viewBox="0 0 24 24" fill="none" stroke="#3563e1" stroke-width="2.2" stroke-linecap="round" stroke-linejoin="round"><path d="M21 15v4a2 2 0 0 1-2 2H5a2 2 0 0 1-2-2v-4"/><polyline points="7 10 12 15 17 10"/><line x1="12" x2="12" y1="15" y2="3"/></svg>
<div class="r" style="left:1018.10px;top:288.10px;width:14.50px;height:14.50px;background:#f5f6f8;border-radius:3px;"></div>
<svg class="i" style="left:1020.85px;top:290.80px;width:9.00px;height:9.00px;" viewBox="0 0 24 24" fill="none" stroke="#d3d6dc" stroke-width="2.2" stroke-linecap="round" stroke-linejoin="round"><path d="M15 2H6a2 2 0 0 0-2 2v16a2 2 0 0 0 2 2h12a2 2 0 0 0 2-2V7Z"/><path d="M14 2v4a2 2 0 0 0 2 2h4"/><path d="m9 15 2 2 4-4"/></svg>
<div class="r" style="left:171.00px;top:311.00px;width:912.00px;height:29.00px;background:#fcfcfd;border-radius:0px;"></div>
<div class="r" style="left:171.00px;top:340.00px;width:912.00px;height:1.00px;background:#f0f1f4;border-radius:0px;"></div>
<div class="r" style="left:198.00px;top:311.00px;width:1.00px;height:29.00px;background:#f0f1f4;border-radius:0px;"></div>
<div class="r" style="left:386.00px;top:311.00px;width:1.00px;height:29.00px;background:#f0f1f4;border-radius:0px;"></div>
<div class="r" style="left:458.00px;top:311.00px;width:1.00px;height:29.00px;background:#f0f1f4;border-radius:0px;"></div>
<div class="r" style="left:569.00px;top:311.00px;width:1.00px;height:29.00px;background:#f0f1f4;border-radius:0px;"></div>
<div class="r" style="left:677.00px;top:311.00px;width:1.00px;height:29.00px;background:#f0f1f4;border-radius:0px;"></div>
<div class="r" style="left:895.00px;top:311.00px;width:1.00px;height:29.00px;background:#f0f1f4;border-radius:0px;"></div>
<div class="r" style="left:968.00px;top:311.00px;width:1.00px;height:29.00px;background:#f0f1f4;border-radius:0px;"></div>
<div class="r" style="left:1048.00px;top:311.00px;width:1.00px;height:29.00px;background:#f0f1f4;border-radius:0px;"></div>
<div class="r" style="left:181.00px;top:320.90px;width:7.60px;height:7.60px;background:#fff;border-radius:1.5px;box-shadow:inset 0 0 0 1px #a0a5ad;"></div>
<div class="r" style="left:209.20px;top:315.50px;width:19.50px;height:19.50px;background:#eff0f3;border-radius:10px;"></div>
<div class="t" style="left:212.57px;top:321px;font-family:'Liberation Sans', sans-serif;font-size:8.2px;line-height:9px;color:#4b5261;font-weight:400;-webkit-text-stroke:0.3px currentColor;">CM</div>
<div class="t" style="left:233.60px;top:321px;font-family:'Liberation Mono', monospace;font-size:8.7px;line-height:10px;color:#1d2330;font-weight:400;-webkit-text-stroke:0.15px currentColor;">Circuit Masters</div>
<div class="r" style="left:396.00px;top:317.30px;width:48.00px;height:16.50px;background:#fff;border-radius:3.5px;box-shadow:inset 0 0 0 1px #d8f2e2;"></div>
<div class="t" style="left:401.80px;top:321px;font-family:'Liberation Sans', sans-serif;font-size:7.4px;line-height:9px;color:#3f8f60;font-weight:400;letter-spacing:0.42px;-webkit-text-stroke:0.12px currentColor;">submitted</div>
<div class="t" style="left:469.00px;top:320px;font-family:'Liberation Sans', sans-serif;font-size:8.8px;line-height:10px;color:#252a35;font-weight:400;-webkit-text-stroke:0.15px currentColor;">Amanda Clark</div>
<svg class="i" style="left:528.96px;top:321.00px;width:8.50px;height:8.50px;" viewBox="0 0 24 24" fill="none" stroke="#8a909a" stroke-width="2" stroke-linecap="round" stroke-linejoin="round"><path d="m6 9 6 6 6-6"/></svg>
<div class="r" style="left:579.30px;top:317.20px;width:80.60px;height:15.80px;background:#fff;border-radius:3.5px;box-shadow:inset 0 0 0 1px #dbe4fa;"></div>
<svg class="i" style="left:584.20px;top:320.80px;width:9.00px;height:9.00px;" viewBox="0 0 24 24" fill="none" stroke="#3563e1" stroke-width="2" stroke-linecap="round" stroke-linejoin="round"><path d="M22 16.92v3a2 2 0 0 1-2.18 2 19.79 19.79 0 0 1-8.63-3.07 19.5 19.5 0 0 1-6-6 19.79 19.79 0 0 1-3.07-8.67A2 2 0 0 1 4.11 2h3a2 2 0 0 1 2 1.72 12.84 12.84 0 0 0 .7 2.81 2 2 0 0 1-.45 2.11L8.09 9.91a16 16 0 0 0 6 6l1.27-1.27a2 2 0 0 1 2.11-.45 12.84 12.84 0 0 0 2.81.7A2 2 0 0 1 22 16.92z"/></svg>
<div class="t" style="left:597.70px;top:320px;font-family:'Liberation Sans', sans-serif;font-size:8.38px;line-height:10px;color:#3a66e0;font-weight:400;">(555) 253-3348</div>
<div class="r" style="left:688.20px;top:317.20px;width:143.52px;height:15.80px;background:#fff;border-radius:3.5px;box-shadow:inset 0 0 0 1px #dbe4fa;"></div>
<svg class="i" style="left:693.10px;top:320.80px;width:9.00px;height:9.00px;" viewBox="0 0 24 24" fill="none" stroke="#3563e1" stroke-width="2" stroke-linecap="round" stroke-linejoin="round"><rect width="20" height="16" x="2" y="4" rx="2"/><path d="m22 7-8.97 5.7a1.94 1.94 0 0 1-2.06 0L2 7"/></svg>
<div class="t" style="left:705.30px;top:321px;font-family:'Liberation Sans', sans-serif;font-size:7.85px;line-height:9px;color:#3a66e0;font-weight:400;-webkit-text-stroke:0.1px currentColor;">amanda.clark@circuitmasters.com</div>
<div class="t" style="left:905.70px;top:321px;font-family:'Liberation Sans', sans-serif;font-size:8.75px;line-height:10px;color:#646b78;font-weight:400;">Phoenix, AZ</div>
<div class="r" style="left:978.80px;top:318.10px;width:14.50px;height:14.50px;background:#edf2fd;border-radius:3px;"></div>
<svg class="i" style="left:980.75px;top:320.80px;width:9.00px;height:9.00px;" viewBox="0 0 24 24" fill="none" stroke="#3563e1" stroke-width="2.2" stroke-linecap="round" stroke-linejoin="round"><path d="M2.062 12.348a1 1 0 0 1 0-.696 10.75 10.75 0 0 1 19.876 0 1 1 0 0 1 0 .696 10.75 10.75 0 0 1-19.876 0"/><circle cx="12" cy="12" r="3"/></svg>
<div class="r" style="left:998.60px;top:318.10px;width:14.50px;height:14.50px;background:#edf2fd;border-radius:3px;"></div>
<svg class="i" style="left:1001.35px;top:320.80px;width:9.00px;height:9.00px;" viewBox="0 0 24 24" fill="none" stroke="#3563e1" stroke-width="2.2" stroke-linecap="round" stroke-linejoin="round"><path d="M21 15v4a2 2 0 0 1-2 2H5a2 2 0 0 1-2-2v-4"/><polyline points="7 10 12 15 17 10"/><line x1="12" x2="12" y1="15" y2="3"/></svg>
<div class="r" style="left:1018.10px;top:318.10px;width:14.50px;height:14.50px;background:#edf2fd;border-radius:3px;"></div>
<svg class="i" style="left:1020.85px;top:320.80px;width:9.00px;height:9.00px;" viewBox="0 0 24 24" fill="none" stroke="#3563e1" stroke-width="2.2" stroke-linecap="round" stroke-linejoin="round"><path d="M15 2H6a2 2 0 0 0-2 2v16a2 2 0 0 0 2 2h12a2 2 0 0 0 2-2V7Z"/><path d="M14 2v4a2 2 0 0 0 2 2h4"/><path d="m9 15 2 2 4-4"/></svg>
<div class="r" style="left:171.00px;top:341.00px;width:912.00px;height:29.00px;background:#fcfcfd;border-radius:0px;"></div>
<div class="r" style="left:171.00px;top:370.00px;width:912.00px;height:1.00px;background:#f0f1f4;border-radius:0px;"></div>
<div class="r" style="left:198.00px;top:341.00px;width:1.00px;height:29.00px;background:#f0f1f4;border-radius:0px;"></div>
<div class="r" style="left:386.00px;top:341.00px;width:1.00px;height:29.00px;background:#f0f1f4;border-radius:0px;"></div>
<div class="r" style="left:458.00px;top:341.00px;width:1.00px;height:29.00px;background:#f0f1f4;border-radius:0px;"></div>
<div class="r" style="left:569.00px;top:341.00px;width:1.00px;height:29.00px;background:#f0f1f4;border-radius:0px;"></div>
<div class="r" style="left:677.00px;top:341.00px;width:1.00px;height:29.00px;background:#f0f1f4;border-radius:0px;"></div>
<div class="r" style="left:895.00px;top:341.00px;width:1.00px;height:29.00px;background:#f0f1f4;border-radius:0px;"></div>
<div class="r" style="left:968.00px;top:341.00px;width:1.00px;height:29.00px;background:#f0f1f4;border-radius:0px;"></div>
<div class="r" style="left:1048.00px;top:341.00px;width:1.00px;height:29.00px;background:#f0f1f4;border-radius:0px;"></div>
<div class="r" style="left:181.00px;top:350.90px;width:7.60px;height:7.60px;background:#fff;border-radius:1.5px;box-shadow:inset 0 0 0 1px #a0a5ad;"></div>
<div class="r" style="left:209.20px;top:345.50px;width:19.50px;height:19.50px;background:#eff0f3;border-radius:10px;"></div>
<div class="t" style="left:213.48px;top:351px;font-family:'Liberation Sans', sans-serif;font-size:8.2px;line-height:9px;color:#4b5261;font-weight:400;-webkit-text-stroke:0.3px currentColor;">EE</div>
<div class="t" style="left:233.60px;top:351px;font-family:'Liberation Mono', monospace;font-size:8.7px;line-height:10px;color:#1d2330;font-weight:400;-webkit-text-stroke:0.15px currentColor;">Elite Electrical Services</div>
<div class="r" style="left:396.00px;top:347.30px;width:48.00px;height:16.50px;background:#fff;border-radius:3.5px;box-shadow:inset 0 0 0 1px #d8f2e2;"></div>
<div class="t" style="left:401.80px;top:351px;font-family:'Liberation Sans', sans-serif;font-size:7.4px;line-height:9px;color:#3f8f60;font-weight:400;letter-spacing:0.42px;-webkit-text-stroke:0.12px currentColor;">submitted</div>
<div class="t" style="left:469.00px;top:350px;font-family:'Liberation Sans', sans-serif;font-size:8.8px;line-height:10px;color:#252a35;font-weight:400;-webkit-text-stroke:0.15px currentColor;">Christopher Davis</div>
<svg class="i" style="left:543.14px;top:351.00px;width:8.50px;height:8.50px;" viewBox="0 0 24 24" fill="none" stroke="#8a909a" stroke-width="2" stroke-linecap="round" stroke-linejoin="round"><path d="m6 9 6 6 6-6"/></svg>
<div class="r" style="left:579.30px;top:347.20px;width:81.00px;height:15.80px;background:#fff;border-radius:3.5px;box-shadow:inset 0 0 0 1px #dbe4fa;"></div>
<svg class="i" style="left:584.20px;top:350.80px;width:9.00px;height:9.00px;" viewBox="0 0 24 24" fill="none" stroke="#3563e1" stroke-width="2" stroke-linecap="round" stroke-linejoin="round"><path d="M22 16.92v3a2 2 0 0 1-2.18 2 19.79 19.79 0 0 1-8.63-3.07 19.5 19.5 0 0 1-6-6 19.79 19.79 0 0 1-3.07-8.67A2 2 0 0 1 4.11 2h3a2 2 0 0 1 2 1.72 12.84 12.84 0 0 0 .7 2.81 2 2 0 0 1-.45 2.11L8.09 9.91a16 16 0 0 0 6 6l1.27-1.27a2 2 0 0 1 2.11-.45 12.84 12.84 0 0 0 2.81.7A2 2 0 0 1 22 16.92z"/></svg>
<div class="t" style="left:597.70px;top:350px;font-family:'Liberation Sans', sans-serif;font-size:8.38px;line-height:10px;color:#3a66e0;font-weight:400;">(555) 506-7379</div>
<div class="r" style="left:688.20px;top:347.20px;width:181.48px;height:15.80px;background:#fff;border-radius:3.5px;box-shadow:inset 0 0 0 1px #dbe4fa;"></div>
<svg class="i" style="left:693.10px;top:350.80px;width:9.00px;height:9.00px;" viewBox="0 0 24 24" fill="none" stroke="#3563e1" stroke-width="2" stroke-linecap="round" stroke-linejoin="round"><rect width="20" height="16" x="2" y="4" rx="2"/><path d="m22 7-8.97 5.7a1.94 1.94 0 0 1-2.06 0L2 7"/></svg>
<div class="t" style="left:705.30px;top:351px;font-family:'Liberation Sans', sans-serif;font-size:7.85px;line-height:9px;color:#3a66e0;font-weight:400;-webkit-text-stroke:0.1px currentColor;">christopher.davis@eliteelectricalservices.com</div>
<div class="t" style="left:905.70px;top:351px;font-family:'Liberation Sans', sans-serif;font-size:8.75px;line-height:10px;color:#646b78;font-weight:400;">Tempe, AZ</div>
<div class="r" style="left:978.80px;top:348.10px;width:14.50px;height:14.50px;background:#f5f6f8;border-radius:3px;"></div>
<svg class="i" style="left:980.75px;top:350.80px;width:9.00px;height:9.00px;" viewBox="0 0 24 24" fill="none" stroke="#d3d6dc" stroke-width="2.2" stroke-linecap="round" stroke-linejoin="round"><path d="M2.062 12.348a1 1 0 0 1 0-.696 10.75 10.75 0 0 1 19.876 0 1 1 0 0 1 0 .696 10.75 10.75 0 0 1-19.876 0"/><circle cx="12" cy="12" r="3"/></svg>
<div class="r" style="left:998.60px;top:348.10px;width:14.50px;height:14.50px;background:#edf2fd;border-radius:3px;"></div>
<svg class="i" style="left:1001.35px;top:350.80px;width:9.00px;height:9.00px;" viewBox="0 0 24 24" fill="none" stroke="#3563e1" stroke-width="2.2" stroke-linecap="round" stroke-linejoin="round"><path d="M21 15v4a2 2 0 0 1-2 2H5a2 2 0 0 1-2-2v-4"/><polyline points="7 10 12 15 17 10"/><line x1="12" x2="12" y1="15" y2="3"/></svg>
<div class="r" style="left:1018.10px;top:348.10px;width:14.50px;height:14.50px;background:#edf2fd;border-radius:3px;"></div>
<svg class="i" style="left:1020.85px;top:350.80px;width:9.00px;height:9.00px;" viewBox="0 0 24 24" fill="none" stroke="#3563e1" stroke-width="2.2" stroke-linecap="round" stroke-linejoin="round"><path d="M15 2H6a2 2 0 0 0-2 2v16a2 2 0 0 0 2 2h12a2 2 0 0 0 2-2V7Z"/><path d="M14 2v4a2 2 0 0 0 2 2h4"/><path d="m9 15 2 2 4-4"/></svg>
<div class="r" style="left:171.00px;top:371.00px;width:912.00px;height:29.00px;background:#fcfcfd;border-radius:0px;border-radius:0 0 4px 4px;"></div>
<div class="r" style="left:198.00px;top:371.00px;width:1.00px;height:29.00px;background:#f0f1f4;border-radius:0px;"></div>
<div class="r" style="left:386.00px;top:371.00px;width:1.00px;height:29.00px;background:#f0f1f4;border-radius:0px;"></div>
<div class="r" style="left:458.00px;top:371.00px;width:1.00px;height:29.00px;background:#f0f1f4;border-radius:0px;"></div>
<div class="r" style="left:569.00px;top:371.00px;width:1.00px;height:29.00px;background:#f0f1f4;border-radius:0px;"></div>
<div class="r" style="left:677.00px;top:371.00px;width:1.00px;height:29.00px;background:#f0f1f4;border-radius:0px;"></div>
<div class="r" style="left:895.00px;top:371.00px;width:1.00px;height:29.00px;background:#f0f1f4;border-radius:0px;"></div>
<div class="r" style="left:968.00px;top:371.00px;width:1.00px;height:29.00px;background:#f0f1f4;border-radius:0px;"></div>
<div class="r" style="left:1048.00px;top:371.00px;width:1.00px;height:29.00px;background:#f0f1f4;border-radius:0px;"></div>
<div class="r" style="left:181.00px;top:380.90px;width:7.60px;height:7.60px;background:#fff;border-radius:1.5px;box-shadow:inset 0 0 0 1px #a0a5ad;"></div>
<div class="r" style="left:209.20px;top:375.50px;width:19.50px;height:19.50px;background:#eff0f3;border-radius:10px;"></div>
<div class="t" style="left:212.80px;top:381px;font-family:'Liberation Sans', sans-serif;font-size:8.2px;line-height:9px;color:#4b5261;font-weight:400;-webkit-text-stroke:0.3px currentColor;">MP</div>
<div class="t" style="left:233.60px;top:381px;font-family:'Liberation Mono', monospace;font-size:8.7px;line-height:10px;color:#1d2330;font-weight:400;-webkit-text-stroke:0.15px currentColor;">Metro Power Systems</div>
<div class="r" style="left:396.00px;top:377.30px;width:48.00px;height:16.50px;background:#fff;border-radius:3.5px;box-shadow:inset 0 0 0 1px #d8f2e2;"></div>
<div class="t" style="left:401.80px;top:381px;font-family:'Liberation Sans', sans-serif;font-size:7.4px;line-height:9px;color:#3f8f60;font-weight:400;letter-spacing:0.42px;-webkit-text-stroke:0.12px currentColor;">submitted</div>
<div class="t" style="left:469.00px;top:380px;font-family:'Liberation Sans', sans-serif;font-size:8.8px;line-height:10px;color:#252a35;font-weight:400;-webkit-text-stroke:0.15px currentColor;">Michelle Scott</div>
<svg class="i" style="left:527.98px;top:381.00px;width:8.50px;height:8.50px;" viewBox="0 0 24 24" fill="none" stroke="#8a909a" stroke-width="2" stroke-linecap="round" stroke-linejoin="round"><path d="m6 9 6 6 6-6"/></svg>
<div class="r" style="left:579.30px;top:377.20px;width:78.00px;height:15.80px;background:#fff;border-radius:3.5px;box-shadow:inset 0 0 0 1px #dbe4fa;"></div>
<svg class="i" style="left:584.20px;top:380.80px;width:9.00px;height:9.00px;" viewBox="0 0 24 24" fill="none" stroke="#3563e1" stroke-width="2" stroke-linecap="round" stroke-linejoin="round"><path d="M22 16.92v3a2 2 0 0 1-2.18 2 19.79 19.79 0 0 1-8.63-3.07 19.5 19.5 0 0 1-6-6 19.79 19.79 0 0 1-3.07-8.67A2 2 0 0 1 4.11 2h3a2 2 0 0 1 2 1.72 12.84 12.84 0 0 0 .7 2.81 2 2 0 0 1-.45 2.11L8.09 9.91a16 16 0 0 0 6 6l1.27-1.27a2 2 0 0 1 2.11-.45 12.84 12.84 0 0 0 2.81.7A2 2 0 0 1 22 16.92z"/></svg>
<div class="t" style="left:597.70px;top:380px;font-family:'Liberation Sans', sans-serif;font-size:8.38px;line-height:10px;color:#3a66e0;font-weight:400;">(555) 746-1419</div>
<div class="r" style="left:688.20px;top:377.20px;width:165.76px;height:15.80px;background:#fff;border-radius:3.5px;box-shadow:inset 0 0 0 1px #dbe4fa;"></div>
<svg class="i" style="left:693.10px;top:380.80px;width:9.00px;height:9.00px;" viewBox="0 0 24 24" fill="none" stroke="#3563e1" stroke-width="2" stroke-linecap="round" stroke-linejoin="round"><rect width="20" height="16" x="2" y="4" rx="2"/><path d="m22 7-8.97 5.7a1.94 1.94 0 0 1-2.06 0L2 7"/></svg>
<div class="t" style="left:705.30px;top:381px;font-family:'Liberation Sans', sans-serif;font-size:7.85px;line-height:9px;color:#3a66e0;font-weight:400;-webkit-text-stroke:0.1px currentColor;">michelle.scott@metropowersystems.com</div>
<div class="t" style="left:905.70px;top:381px;font-family:'Liberation Sans', sans-serif;font-size:8.75px;line-height:10px;color:#646b78;font-weight:400;">Phoenix, AZ</div>
<div class="r" style="left:978.80px;top:378.10px;width:14.50px;height:14.50px;background:#f5f6f8;border-radius:3px;"></div>
<svg class="i" style="left:980.75px;top:380.80px;width:9.00px;height:9.00px;" viewBox="0 0 24 24" fill="none" stroke="#d3d6dc" stroke-width="2.2" stroke-linecap="round" stroke-linejoin="round"><path d="M2.062 12.348a1 1 0 0 1 0-.696 10.75 10.75 0 0 1 19.876 0 1 1 0 0 1 0 .696 10.75 10.75 0 0 1-19.876 0"/><circle cx="12" cy="12" r="3"/></svg>
<div class="r" style="left:998.60px;top:378.10px;width:14.50px;height:14.50px;background:#f5f6f8;border-radius:3px;"></div>
<svg class="i" style="left:1001.35px;top:380.80px;width:9.00px;height:9.00px;" viewBox="0 0 24 24" fill="none" stroke="#d3d6dc" stroke-width="2.2" stroke-linecap="round" stroke-linejoin="round"><path d="M21 15v4a2 2 0 0 1-2 2H5a2 2 0 0 1-2-2v-4"/><polyline points="7 10 12 15 17 10"/><line x1="12" x2="12" y1="15" y2="3"/></svg>
<div class="r" style="left:1018.10px;top:378.10px;width:14.50px;height:14.50px;background:#edf2fd;border-radius:3px;"></div>
<svg class="i" style="left:1020.85px;top:380.80px;width:9.00px;height:9.00px;" viewBox="0 0 24 24" fill="none" stroke="#3563e1" stroke-width="2.2" stroke-linecap="round" stroke-linejoin="round"><path d="M15 2H6a2 2 0 0 0-2 2v16a2 2 0 0 0 2 2h12a2 2 0 0 0 2-2V7Z"/><path d="M14 2v4a2 2 0 0 0 2 2h4"/><path d="m9 15 2 2 4-4"/></svg>
<div class="r" style="left:170px;top:106px;width:914px;height:295px;box-sizing:border-box;border:1px solid #eceef2;border-radius:5px;"></div>
</div><div id="frame"></div></body></html>
